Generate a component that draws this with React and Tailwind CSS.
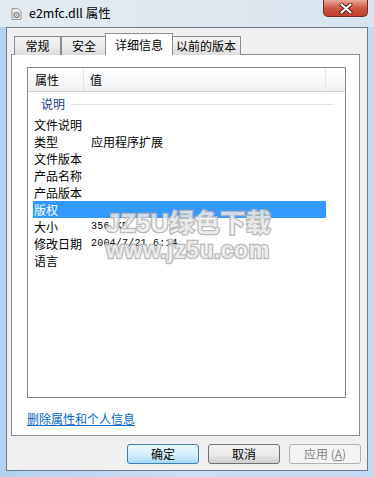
import React from "react";

const cjk = "font-['Microsoft_YaHei','Noto_Sans_CJK_SC',sans-serif]";

function Tab({ label, w, selected }) {
  if (selected) {
    return (
      <div
        className={`h-[22px] -mx-[2px] relative z-10 bg-white border border-b-0 border-[#898c95] flex items-center justify-center text-[12px] text-black ${cjk}`}
        style={{ width: w }}
      >
        {label}
      </div>
    );
  }
  return (
    <div
      className={`h-[19px] bg-gradient-to-b from-[#f4f4f4] via-[#ececec] to-[#dcdcdc] border border-b-0 border-[#898c95] flex items-center justify-center text-[12px] text-black ${cjk}`}
      style={{ width: w }}
    >
      {label}
    </div>
  );
}

function Row({ label, value, selected, mono }) {
  return (
    <div
      className={`ml-[5px] w-[293px] h-[17px] flex items-center text-[12px] ${cjk} ${
        selected ? "bg-[#3399ff] text-white" : "text-black"
      }`}
    >
      <div className="w-[58px] pl-[1px] whitespace-nowrap">{label}</div>
      <div
        className={
          mono
            ? "font-['Liberation_Mono',monospace] text-[10px] tracking-[0.2px]"
            : ""
        }
      >
        {value}
      </div>
    </div>
  );
}

export default function App() {
  const rows = [
    ["文件说明", ""],
    ["类型", "应用程序扩展"],
    ["文件版本", ""],
    ["产品名称", ""],
    ["产品版本", ""],
    ["版权", "", true],
    ["大小", "356 KB", false, true],
    ["修改日期", "2004/7/21 6:14", false, true],
    ["语言", ""],
  ];

  return (
    <div className="w-[374px] h-[477px] relative overflow-hidden flex flex-col bg-gradient-to-r from-[#b3d1f2] via-[#cde0f3] to-[#c2daf3]">
      {/* title bar */}
      <div className="h-[27px] flex items-start bg-gradient-to-r from-[#e3ebf2] via-[#dfe8f0] to-[#d7e4ef]">
        <svg className="ml-[11px] mt-[8px]" width="11" height="12" viewBox="0 0 11 12">
          <path d="M1 .5h6l3 3v8H1z" fill="#e8e8e8" stroke="#9a9a9a" />
          <circle cx="5.5" cy="7" r="2.5" fill="none" stroke="#7d7d7d" strokeWidth="1.2" />
          <circle cx="5.5" cy="7" r="0.8" fill="#7d7d7d" />
        </svg>
        <div className={`ml-[7px] mt-[5px] text-[12.5px] leading-[16px] text-black ${cjk}`}>
          e2mfc.dll 属性
        </div>
        <div className="ml-auto mr-[6px] w-[45px] h-[17px] rounded-b-[5px] border border-t-0 border-[#6e2a20] bg-gradient-to-b from-[#e9a99a] via-[#d0563f] to-[#c1402b] flex items-center justify-center">
          <svg width="14" height="11" viewBox="0 0 14 11">
            <path d="M2.5 1.5l9 8M11.5 1.5l-9 8" stroke="#4a1c15" strokeWidth="4" strokeLinecap="round" />
            <path d="M2.5 1.5l9 8M11.5 1.5l-9 8" stroke="#ffffff" strokeWidth="2.2" strokeLinecap="round" />
          </svg>
        </div>
      </div>

      {/* client area */}
      <div className="ml-[6px] w-[362px] h-[444px] border border-[#6b7a8c] bg-[#f0f0f0] flex flex-col">
        {/* tabs */}
        <div className="mt-[5px] -mb-[1px] pl-[7px] h-[22px] flex items-end relative z-10">
          <Tab label="常规" w={47} />
          <Tab label="安全" w={46} />
          <Tab label="详细信息" w={68} selected />
          <Tab label="以前的版本" w={70} />
        </div>

        {/* panel */}
        <div className="ml-[4px] w-[349px] h-[382px] border border-[#898c95] bg-white flex flex-col">
          <div className="ml-[15px] mt-[12px] w-[319px] h-[331px] border border-[#828790] bg-white flex flex-col">
            {/* header */}
            <div className={`h-[24px] shrink-0 flex items-stretch border-b border-[#d5d5d5] bg-gradient-to-b from-[#ffffff] to-[#f1f2f4] text-[12px] text-black ${cjk}`}>
              <div className="w-[56px] pl-[7px] flex items-center border-r border-[#e3e4e6]">属性</div>
              <div className="w-[242px] pl-[6px] flex items-center border-r border-[#e3e4e6]">值</div>
            </div>
            {/* group */}
            <div className="h-[24px] shrink-0 flex items-center pl-[13px] pr-[11px]">
              <span className={`text-[12px] text-[#1e3a8a] ${cjk}`}>说明</span>
              <div className="flex-1 ml-[6px] h-px bg-[#dfe3e8]" />
            </div>
            {rows.map((r) => (
              <Row key={r[0]} label={r[0]} value={r[1]} selected={r[2]} mono={r[3]} />
            ))}
          </div>
          <div className="ml-[15px] mt-[8px]">
            <span className={`text-[12px] leading-[16px] text-[#0066cc] underline ${cjk}`}>
              删除属性和个人信息
            </span>
          </div>
        </div>

        {/* buttons */}
        <div className="mt-[8px] pr-[6px] flex justify-end gap-[9px]">
          <div className={`w-[72px] h-[20px] rounded-[3px] border border-[#3c7fb1] bg-gradient-to-b from-[#eaf6fd] via-[#d9f0fc] to-[#a7d9f5] flex items-center justify-center text-[12px] text-black ${cjk}`}>
            确定
          </div>
          <div className={`w-[72px] h-[20px] rounded-[3px] border border-[#707070] bg-gradient-to-b from-[#f2f2f2] via-[#ebebeb] to-[#cfcfcf] flex items-center justify-center text-[12px] text-black ${cjk}`}>
            取消
          </div>
          <div className={`w-[72px] h-[20px] rounded-[3px] border border-[#adb2b5] bg-[#f4f4f4] flex items-center justify-center text-[12px] text-[#838383] ${cjk}`}>
            应用 (<span className="underline">A</span>)
          </div>
        </div>
      </div>

      {/* watermark */}
      <div className="absolute left-[106px] top-[211px] pointer-events-none select-none flex flex-col leading-none opacity-90">
        <div className="font-['Liberation_Sans','Noto_Sans_CJK_SC',sans-serif] font-bold text-[25px] text-white/70 [-webkit-text-stroke:2.5px_#b3b3b3] [paint-order:stroke_fill] tracking-[0.5px]">
          JZ5U绿色下载
        </div>
        <div className="mt-[3px] font-['Liberation_Sans',sans-serif] font-bold text-[23px] text-white/70 [-webkit-text-stroke:2.5px_#b3b3b3] [paint-order:stroke_fill] tracking-[0.5px]">
          www.jz5u.com
        </div>
      </div>
    </div>
  );
}
